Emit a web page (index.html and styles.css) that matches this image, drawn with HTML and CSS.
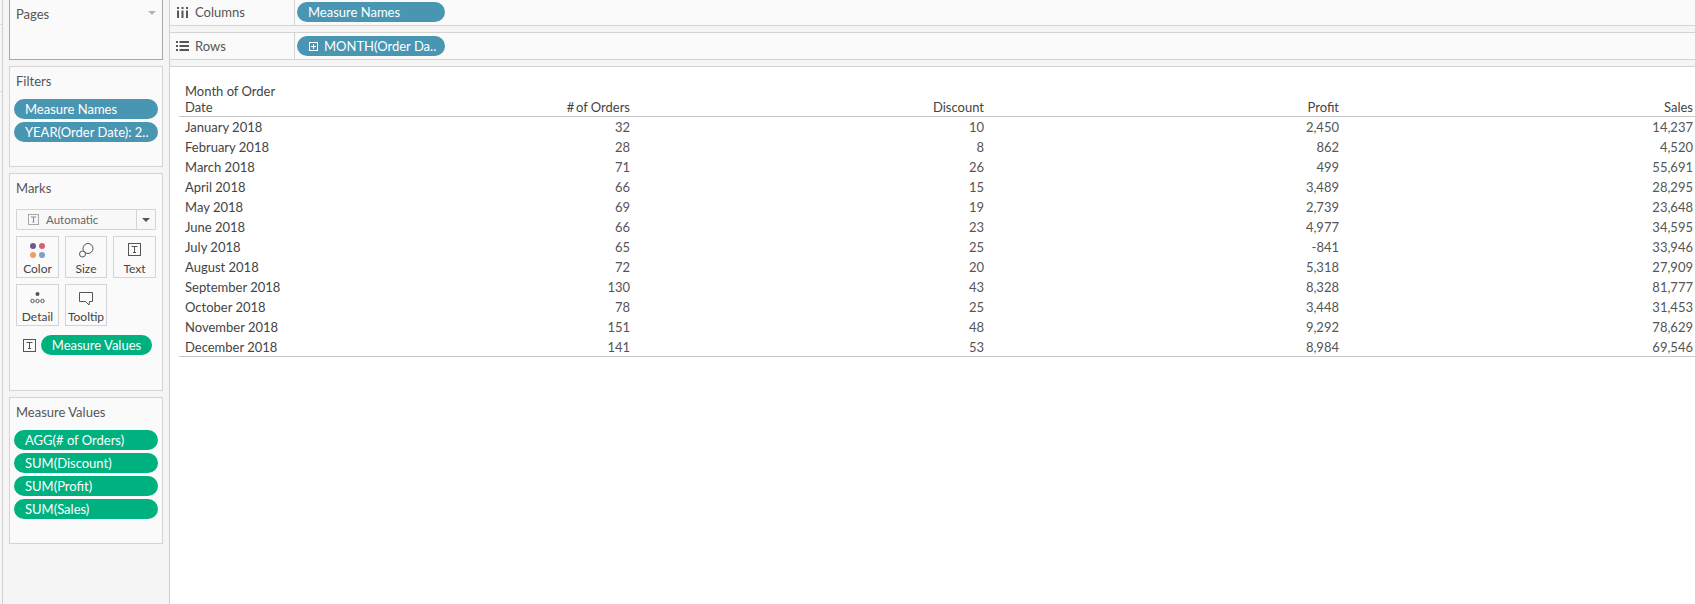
FILE: index.html
```html
<!DOCTYPE html>
<html lang="en">
<head>
<meta charset="utf-8">
<title>Tableau worksheet</title>
<link rel="stylesheet" href="styles.css">
</head>
<body>
<div class="app">
  <div class="edge"></div>
  <aside class="side">
    <section class="card card-pages">
      <div class="card-title">Pages<span class="caret"></span></div>
    </section>
    <section class="card card-filters">
      <div class="card-title">Filters</div>
      <div class="pills">
        <div class="pill blue">Measure Names</div>
        <div class="pill blue">YEAR(Order Date): 2..</div>
      </div>
    </section>
    <section class="card card-marks">
      <div class="card-title">Marks</div>
      <div class="dropdown">
        <div class="dd-main">
          <svg class="dd-icon" viewBox="0 0 11 11"><rect x=".5" y=".5" width="10" height="10" fill="none" stroke="#a8a8a8"/><path d="M3 3h5M5.500 3v5M4.500 8h2" fill="none" stroke="#8a8a8a"/></svg>
          <span>Automatic</span>
        </div>
        <div class="dd-arrow"><span class="caret dark"></span></div>
      </div>
      <div class="mark-grid">
        <div class="mark">
          <svg class="mi" viewBox="0 0 15 15"><circle cx="3" cy="3" r="3" fill="#6e5a8c"/><circle cx="12" cy="3" r="3" fill="#dc5f78"/><circle cx="3" cy="12" r="3" fill="#ee9f68"/><circle cx="12" cy="12" r="3" fill="#7a9fc8"/></svg>
          <span>Color</span>
        </div>
        <div class="mark">
          <svg class="mi" viewBox="0 0 15 15"><circle cx="9" cy="5.500" r="5" fill="none" stroke="#555"/><circle cx="3.500" cy="11" r="3" fill="#fafafa" stroke="#555"/></svg>
          <span>Size</span>
        </div>
        <div class="mark">
          <svg class="mi" viewBox="0 0 15 15"><rect x="1.500" y=".5" width="12" height="12" fill="none" stroke="#555"/><path d="M4.500 3.500h6M7.500 3.500v6M6 9.500h3" fill="none" stroke="#555"/></svg>
          <span>Text</span>
        </div>
        <div class="mark">
          <svg class="mi" viewBox="0 0 15 15"><circle cx="7.500" cy="3" r="2" fill="#555"/><circle cx="2.500" cy="10" r="1.700" fill="none" stroke="#555"/><circle cx="7.500" cy="10" r="1.700" fill="none" stroke="#555"/><circle cx="12.500" cy="10" r="1.700" fill="none" stroke="#555"/></svg>
          <span>Detail</span>
        </div>
        <div class="mark">
          <svg class="mi" viewBox="0 0 15 15"><path d="M.5 1.500h13v9h-3l-.5 3.500-3.500-3.500H.5z" fill="none" stroke="#555"/></svg>
          <span>Tooltip</span>
        </div>
      </div>
      <div class="mark-pill-row">
        <svg class="ti" viewBox="0 0 13 13"><rect x=".5" y=".5" width="12" height="12" fill="none" stroke="#555"/><path d="M3.500 3.500h6M6.500 3.500v6M5 9.500h3" fill="none" stroke="#555"/></svg>
        <div class="pill green center">Measure Values</div>
      </div>
    </section>
    <section class="card card-values">
      <div class="card-title">Measure Values</div>
      <div class="pills">
        <div class="pill green">AGG(# of Orders)</div>
        <div class="pill green">SUM(Discount)</div>
        <div class="pill green">SUM(Profit)</div>
        <div class="pill green">SUM(Sales)</div>
      </div>
    </section>
  </aside>
  <main class="main">
    <div class="shelf shelf-columns">
      <div class="shelf-label">
        <svg class="si" viewBox="0 0 11 11"><path d="M0 0h2v2H0zM0 3.500h2V11H0zM4.500 0h2v2h-2zM4.500 3.500h2V11h-2zM9 0h2v2H9zM9 3.500h2V11H9z" fill="#555"/></svg>
        <span>Columns</span>
      </div>
      <div class="shelf-body"><div class="pill blue shelf-pill">Measure Names</div></div>
    </div>
    <div class="shelf shelf-rows">
      <div class="shelf-label">
        <svg class="si wide" viewBox="0 0 13 10"><path d="M0 0h2v2H0zM3.500 0H13v2H3.500zM0 4h2v2H0zM3.500 4H13v2H3.500zM0 8h2v2H0zM3.500 8H13v2H3.500z" fill="#555"/></svg>
        <span>Rows</span>
      </div>
      <div class="shelf-body">
        <div class="pill blue shelf-pill with-icon">
          <svg class="plus" viewBox="0 0 9 9"><rect x=".5" y=".5" width="8" height="8" fill="none" stroke="#fff"/><path d="M4.500 2v5M2 4.500h5" stroke="#fff"/></svg>
          <span>MONTH(Order Da..</span>
        </div>
      </div>
    </div>
    <div class="view">
      <div class="table">
        <div class="row head">
          <div class="c first">Month of Order<br>Date</div>
          <div class="c">#&#8201;of Orders</div>
          <div class="c">Discount</div>
          <div class="c">Profit</div>
          <div class="c">Sales</div>
        </div>
        <div class="row"><div class="c first">January 2018</div><div class="c">32</div><div class="c">10</div><div class="c">2,450</div><div class="c">14,237</div></div>
        <div class="row"><div class="c first">February 2018</div><div class="c">28</div><div class="c">8</div><div class="c">862</div><div class="c">4,520</div></div>
        <div class="row"><div class="c first">March 2018</div><div class="c">71</div><div class="c">26</div><div class="c">499</div><div class="c">55,691</div></div>
        <div class="row"><div class="c first">April 2018</div><div class="c">66</div><div class="c">15</div><div class="c">3,489</div><div class="c">28,295</div></div>
        <div class="row"><div class="c first">May 2018</div><div class="c">69</div><div class="c">19</div><div class="c">2,739</div><div class="c">23,648</div></div>
        <div class="row"><div class="c first">June 2018</div><div class="c">66</div><div class="c">23</div><div class="c">4,977</div><div class="c">34,595</div></div>
        <div class="row"><div class="c first">July 2018</div><div class="c">65</div><div class="c">25</div><div class="c">-841</div><div class="c">33,946</div></div>
        <div class="row"><div class="c first">August 2018</div><div class="c">72</div><div class="c">20</div><div class="c">5,318</div><div class="c">27,909</div></div>
        <div class="row"><div class="c first">September 2018</div><div class="c">130</div><div class="c">43</div><div class="c">8,328</div><div class="c">81,777</div></div>
        <div class="row"><div class="c first">October 2018</div><div class="c">78</div><div class="c">25</div><div class="c">3,448</div><div class="c">31,453</div></div>
        <div class="row"><div class="c first">November 2018</div><div class="c">151</div><div class="c">48</div><div class="c">9,292</div><div class="c">78,629</div></div>
        <div class="row last"><div class="c first">December 2018</div><div class="c">141</div><div class="c">53</div><div class="c">8,984</div><div class="c">69,546</div></div>
      </div>
    </div>
  </main>
</div>
</body>
</html>
```
FILE: styles.css
```css
* { box-sizing: border-box; }
html, body { margin: 0; height: 100%; }
body { overflow: hidden; background: #f5f5f5; font-family: Lato, "Open Sans", sans-serif; font-size: 13px; color: #555; }
.app { display: flex; height: 604px; width: 1695px; }
.edge { width: 3px; flex: none; border-right: 1px solid #cfcfcf; background: linear-gradient(#dcdcdc, #dcdcdc) 0 24px / 2px 1px no-repeat, linear-gradient(#dcdcdc, #dcdcdc) 0 91px / 2px 1px no-repeat; }
.side { width: 167px; flex: none; padding: 0 6px; display: flex; flex-direction: column; gap: 6px; border-right: 1px solid #cfcfcf; }
.card { background: #fafafa; border: 1px solid #d4d4d4; flex: none; }
.card-pages { height: 61px; margin-top: -1px; border-color: #a8a8a8; border-top-color: #d4d4d4; }
.card-filters { height: 101px; }
.card-marks { height: 218px; }
.card-values { height: 147px; }
.card-title { position: relative; height: 32px; padding: 6px 0 0 6px; line-height: 16px; font-size: 13px; color: #555; }
.caret { display: block; width: 0; height: 0; border: 4px solid transparent; border-top: 4px solid #b5b5b5; border-bottom: 0; }
.card-title .caret { position: absolute; right: 6px; top: 11px; }
.caret.dark { border-top-color: #555; }
.pills { display: flex; flex-direction: column; gap: 3px; padding: 0 4px; }
.pill { height: 20px; border-radius: 10px; color: #fff; line-height: 20px; padding-left: 11px; white-space: nowrap; overflow: hidden; font-size: 13px; }
.blue { background: #4996b2; }
.green { background: #00b180; }
.center { padding-left: 0; text-align: center; flex: 1; }
.dropdown { display: flex; height: 21px; margin: 3px 6px 0; border: 1px solid #d4d4d4; background: #f8f8f8; border-radius: 1px; }
.dd-main { flex: 1; display: flex; align-items: center; gap: 7px; padding-left: 11px; font-size: 11.5px; color: #666; border-right: 1px solid #d4d4d4; }
.dd-icon { width: 11px; height: 11px; }
.dd-arrow { width: 18px; flex: none; display: flex; align-items: center; justify-content: center; }
.mark-grid { display: grid; grid-template-columns: 43px 42px 43px; gap: 6px; margin: 6px 6px 0; }
.mark { height: 42px; border: 1px solid #d4d4d4; background: #fafafa; display: flex; flex-direction: column; align-items: center; padding-top: 6px; font-size: 12px; color: #444; line-height: 14px; gap: 4px; }
.mi { width: 15px; height: 15px; flex: none; }
.mark-pill-row { display: flex; align-items: center; gap: 5px; margin: 9px 10px 0 13px; }
.ti { width: 13px; height: 13px; flex: none; }
.main { flex: 1; display: flex; flex-direction: column; min-width: 0; }
.shelf { display: flex; background: #fafafa; border-bottom: 1px solid #d4d4d4; flex: none; }
.shelf-columns { height: 26px; margin-bottom: 6px; }
.shelf-rows { height: 28px; border-top: 1px solid #d4d4d4; margin-bottom: 6px; }
.shelf-label { width: 125px; flex: none; display: flex; align-items: center; gap: 7px; padding: 0 0 1px 7px; border-right: 1px solid #d4d4d4; font-size: 13px; color: #555; }
.si { width: 11px; height: 11px; flex: none; }
.si.wide { width: 13px; height: 10px; margin-left: -1px; margin-right: -1px; }
.shelf-body { flex: 1; padding-left: 2px; }
.shelf-columns .shelf-body { padding-top: 2px; }
.shelf-rows .shelf-body { padding-top: 3px; }
.shelf-pill { width: 148px; }
.with-icon { display: flex; align-items: center; gap: 6px; padding-left: 12px; }
.plus { width: 9px; height: 9px; flex: none; }
.view { flex: 1; background: #fff; border-top: 1px solid #d4d4d4; padding: 12px 0 0 9px; margin-left: -1px; border-left: 1px solid #cfcfcf; }
.row { display: grid; grid-template-columns: 97px 354px 354px 355px 354px; height: 20px; align-items: center; line-height: 16px; }
.row.head { height: 38px; align-items: end; border-bottom: 1px solid #c8c8c8; padding-bottom: 1px; }
.row.last { border-bottom: 1px solid #c8c8c8; }
.c { text-align: right; color: #555; white-space: nowrap; }
.head .c { color: #444; }
.c.first { text-align: left; padding-left: 6px; color: #444; }
```
